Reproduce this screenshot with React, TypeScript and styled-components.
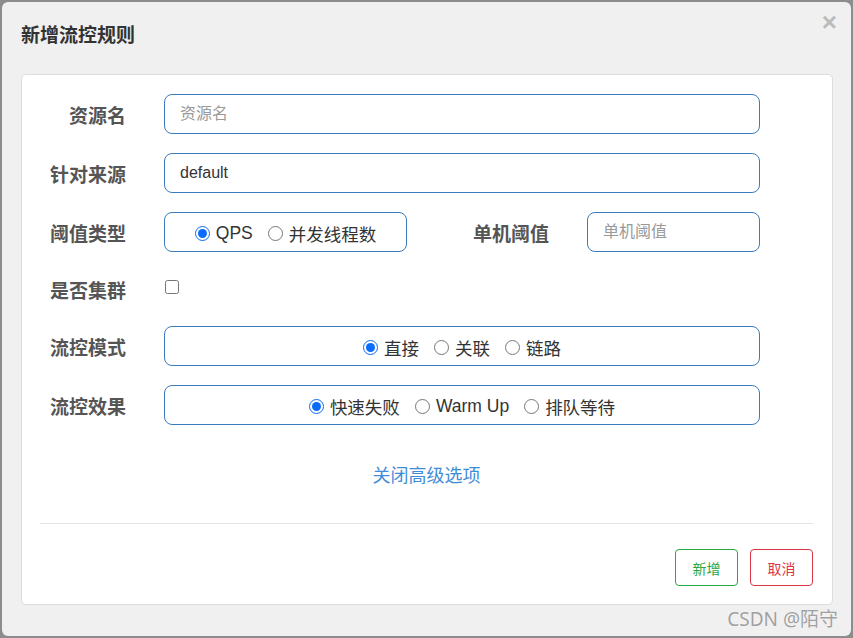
import styled, { createGlobalStyle } from "styled-components";

const GlobalStyle = createGlobalStyle`
    html, body {
        margin: 0;
        padding: 0;
        background: #8c8c8c;
    }
    body {
        font-family: "Liberation Sans", "Noto Sans CJK SC", sans-serif;
    }
`;

const Dialog = styled.div`
    position: relative;
    margin: 2px;
    width: 849px;
    height: 634px;
    box-sizing: border-box;
    background: #f0f0f0;
    border-radius: 6px;
    padding: 0 18px 0 19px;
`;

const Header = styled.div`
    height: 72px;
    display: flex;
    align-items: center;
    box-sizing: border-box;
`;

const Title = styled.h4`
    margin: -4px 0 0 0;
    font-size: 19px;
    font-weight: bold;
    color: #333;
    line-height: 24px;
`;

const Close = styled.span`
    position: absolute;
    top: 6px;
    right: 14px;
    font-size: 26px;
    font-weight: bold;
    color: #bbb;
    line-height: 28px;
`;

const Panel = styled.div`
    background: #fff;
    border: 1px solid #ddd;
    border-radius: 5px;
    padding: 19px 19px 18px 18px;
`;

const Form = styled.div`
    display: flex;
    flex-direction: column;
    gap: 19px;
`;

const Row = styled.div<{ short?: boolean }>`
    display: grid;
    grid-template-columns: 86px 596px;
    column-gap: 38px;
    align-items: center;
    height: ${(p) => (p.short ? "36px" : "40px")};
`;

const Label = styled.label`
    text-align: right;
    font-size: 19px;
    font-weight: bold;
    color: #555;
`;

const Input = styled.input`
    box-sizing: border-box;
    width: 100%;
    height: 40px;
    border: 1px solid #3c7bbd;
    border-radius: 8px;
    padding: 0 15px;
    font-family: inherit;
    font-size: 16px;
    color: #333;
    outline: none;
    &::placeholder {
        color: #999;
    }
`;

const RadioBox = styled.div`
    box-sizing: border-box;
    height: 40px;
    border: 1px solid #3c7bbd;
    border-radius: 8px;
    display: flex;
    align-items: center;
    justify-content: center;
    gap: 15px;
    padding-top: 3px;
`;

const Option = styled.label`
    display: flex;
    align-items: center;
    gap: 6px;
    font-size: 17.5px;
    color: #333;
    input {
        margin: 0;
        width: 15px;
        height: 15px;
        accent-color: #0b6bfa;
    }
`;

const Split = styled.div`
    display: grid;
    grid-template-columns: 243px 180px 173px;
    align-items: center;
`;

const SubLabel = styled(Label)`
    padding-right: 38px;
`;

const Check = styled.input`
    margin: 0 0 0 1px;
    width: 14px;
    height: 14px;
`;

const Toggle = styled.a`
    display: block;
    text-align: center;
    margin-top: 40px;
    font-size: 18px;
    line-height: 22px;
    color: #3f8dd6;
    text-decoration: none;
`;

const Divider = styled.hr`
    border: none;
    border-top: 1px solid #e5e5e5;
    margin: 36px 0 25px 0;
`;

const Footer = styled.div`
    display: flex;
    justify-content: flex-end;
    gap: 12px;
`;

const Button = styled.button<{ tone: string }>`
    width: 63px;
    height: 37px;
    background: #fff;
    border: 1px solid ${(p) => p.tone};
    color: ${(p) => p.tone};
    border-radius: 4px;
    font-family: inherit;
    font-size: 14px;
`;

const Watermark = styled.span`
    position: absolute;
    right: 13px;
    bottom: 4px;
    font-family: "Noto Sans", "Noto Sans CJK SC", sans-serif;
    font-size: 19px;
    color: #a0a0a0;
    text-shadow: 0 0 1px #fff;
`;

export default function App() {
    return (
        <>
            <GlobalStyle />
            <Dialog>
                <Header>
                    <Title>新增流控规则</Title>
                </Header>
                <Close>×</Close>
                <Panel>
                    <Form>
                        <Row>
                            <Label>资源名</Label>
                            <Input placeholder="资源名" />
                        </Row>
                        <Row>
                            <Label>针对来源</Label>
                            <Input defaultValue="default" />
                        </Row>
                        <Row>
                            <Label>阈值类型</Label>
                            <Split>
                                <RadioBox>
                                    <Option><input type="radio" name="grade" defaultChecked />QPS</Option>
                                    <Option><input type="radio" name="grade" />并发线程数</Option>
                                </RadioBox>
                                <SubLabel>单机阈值</SubLabel>
                                <Input placeholder="单机阈值" />
                            </Split>
                        </Row>
                        <Row short>
                            <Label>是否集群</Label>
                            <div><Check type="checkbox" /></div>
                        </Row>
                        <Row>
                            <Label>流控模式</Label>
                            <RadioBox>
                                <Option><input type="radio" name="strategy" defaultChecked />直接</Option>
                                <Option><input type="radio" name="strategy" />关联</Option>
                                <Option><input type="radio" name="strategy" />链路</Option>
                            </RadioBox>
                        </Row>
                        <Row>
                            <Label>流控效果</Label>
                            <RadioBox>
                                <Option><input type="radio" name="effect" defaultChecked />快速失败</Option>
                                <Option><input type="radio" name="effect" />Warm Up</Option>
                                <Option><input type="radio" name="effect" />排队等待</Option>
                            </RadioBox>
                        </Row>
                    </Form>
                    <Toggle>关闭高级选项</Toggle>
                    <Divider />
                    <Footer>
                        <Button tone="#28a745">新增</Button>
                        <Button tone="#dc3545">取消</Button>
                    </Footer>
                </Panel>
                <Watermark>CSDN @陌守</Watermark>
            </Dialog>
        </>
    );
}
